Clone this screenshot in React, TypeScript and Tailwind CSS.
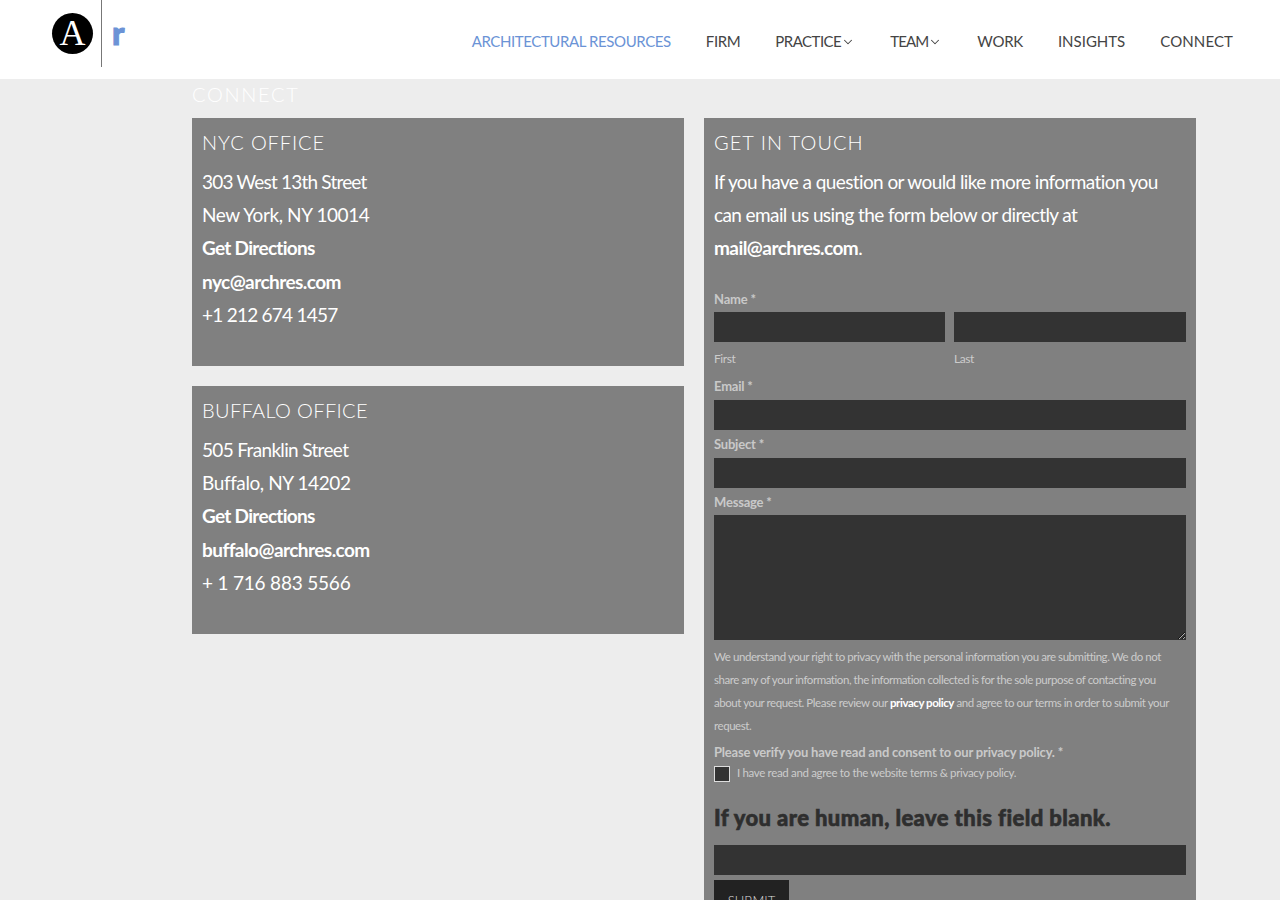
import React from "react";
import { ChevronDown } from "lucide-react";

const font = "font-['Lato',sans-serif]";

function NavItem({ label, track, blue, chevron }: { label: string; track: string; blue?: boolean; chevron?: boolean }) {
  return (
    <a className={`flex items-center text-[15px] leading-[20px] ${blue ? "text-[#6b93d6]" : "text-[#444444]"}`}>
      <span className={track}>{label}</span>
      {chevron && <ChevronDown size={14} strokeWidth={1.8} className="mt-[1px]" />}
    </a>
  );
}

function Logo() {
  return (
    <div className="flex h-[67px] items-start">
      <div className="mt-[13px] flex h-[41px] w-[41px] items-center justify-center rounded-full bg-black pb-[1px] font-['Liberation_Serif',serif] text-[36px] leading-none text-white">
        A
      </div>
      <div className="ml-[8px] h-[67px] w-px bg-[#777777]" />
      <div className="ml-[10px] mt-[14px] font-['Lato',sans-serif] text-[33px] font-black leading-[36px] text-[#6b93d6] [-webkit-text-stroke:1px_#6b93d6]">r</div>
    </div>
  );
}

function Office({ title, titleTrack, lines }: { title: string; titleTrack: string; lines: [string, string][] }) {
  return (
    <section className="h-[248px] bg-[#808080] px-[10px] pt-[10px] text-white">
      <h2 className={`text-[20px] font-light leading-[28px] ${titleTrack}`}>{title}</h2>
      <div className="mt-[9px] text-[19px] leading-[33.2px]">
        {lines.map(([t, c]) => (
          <div key={t} className={c}>{t}</div>
        ))}
      </div>
    </section>
  );
}

const inputCls = "block h-[30px] w-full bg-[#333333] outline-none";
const labelCls = "block text-[13px] font-bold leading-[16px] tracking-[-0.2px] text-[#c9c9c9]";

export default function App() {
  return (
    <div className={`${font} h-[900px] overflow-hidden bg-[#ededed]`}>
      <header className="flex h-[79px] items-start justify-between bg-white pl-[52px] pr-[47px]">
        <Logo />
        <nav className="mt-[31px] flex items-center gap-[35px]">
          <NavItem label="ARCHITECTURAL RESOURCES" track="tracking-[-0.4px]" blue />
          <NavItem label="FIRM" track="tracking-[-0.4px]" />
          <NavItem label="PRACTICE" track="tracking-[-0.5px]" chevron />
          <NavItem label="TEAM" track="tracking-[-0.9px]" chevron />
          <NavItem label="WORK" track="tracking-[-0.28px]" />
          <NavItem label="INSIGHTS" track="tracking-[0px]" />
          <NavItem label="CONNECT" track="tracking-[0.1px]" />
        </nav>
      </header>

      <main className="ml-[192px] w-[1004px]">
        <h1 className="pt-[3px] text-[20px] font-light leading-[25px] tracking-[1.7px] text-white">CONNECT</h1>
        <div className="mt-[11px] grid grid-cols-2 gap-[20px]">
          <div className="flex flex-col gap-[20px]">
            <Office
              title="NYC OFFICE"
              titleTrack="tracking-[0.9px]"
              lines={[
                ["303 West 13th Street", "tracking-[-0.8px]"],
                ["New York, NY 10014", "tracking-[-0.4px]"],
                ["Get Directions", "font-bold tracking-[-0.7px]"],
                ["nyc@archres.com", "font-bold tracking-[-0.56px]"],
                ["+1 212 674 1457", "tracking-[-0.75px]"],
              ]}
            />
            <Office
              title="BUFFALO OFFICE"
              titleTrack="tracking-[0.35px]"
              lines={[
                ["505 Franklin Street", "tracking-[-0.66px]"],
                ["Buffalo, NY 14202", "tracking-[-0.4px]"],
                ["Get Directions", "font-bold tracking-[-0.7px]"],
                ["buffalo@archres.com", "font-bold tracking-[-0.56px]"],
                ["+ 1 716 883 5566", "tracking-[-0.2px]"],
              ]}
            />
          </div>

          <section className="bg-[#808080] px-[10px] pb-[40px] pt-[10px]">
            <h2 className="text-[20px] font-light leading-[28px] tracking-[1.0px] text-white">GET IN TOUCH</h2>
            <p className="mt-[9px] text-[19px] leading-[33.2px] tracking-[-0.6px] text-white">
              If you have a question or would like more information you
              <br />
              can email us using the form below or directly at
              <br />
              <b className="tracking-[-0.56px]">mail@archres.com</b>.
            </p>

            <label className={`${labelCls} mt-[26px]`}>Name *</label>
            <div className="mt-[5px] grid grid-cols-[231px_1fr] gap-[9px]">
              <div>
                <input className={inputCls} />
                <div className="mt-[9px] text-[12px] leading-[16px] tracking-[-0.4px] text-[#cccccc]">First</div>
              </div>
              <div>
                <input className={inputCls} />
                <div className="mt-[9px] text-[12px] leading-[16px] tracking-[-0.4px] text-[#cccccc]">Last</div>
              </div>
            </div>

            <label className={`${labelCls} mt-[11px]`}>Email *</label>
            <input className={`${inputCls} mt-[6px]`} />
            <label className={`${labelCls} mt-[6px]`}>Subject *</label>
            <input className={`${inputCls} mt-[6px]`} />
            <label className={`${labelCls} mt-[6px]`}>Message *</label>
            <textarea className="mt-[5px] block h-[125px] w-full bg-[#333333] outline-none" />

            <p className="mt-[5px] text-[11.5px] leading-[23px] tracking-[-0.44px] text-[#cccccc]">
              We understand your right to privacy with the personal information you are submitting. We do not
              <br />
              share any of your information, the information collected is for the sole purpose of contacting you
              <br />
              about your request. Please review our <b className="text-white">privacy policy</b> and agree to our terms in order to submit your
              <br />
              request.
            </p>
            <label className={`${labelCls} mt-[7px]`}>Please verify you have read and consent to our privacy policy. *</label>
            <div className="mt-[6px] flex items-start">
              <span className="block h-[16px] w-[16px] border border-[#dddddd] bg-[#333333]" />
              <span className="ml-[7px] text-[11.5px] leading-[14px] tracking-[-0.34px] text-[#cccccc]">
                I have read and agree to the website terms &amp; privacy policy.
              </span>
            </div>
            <h3 className="mt-[21px] text-[22px] font-black leading-[30px] tracking-[0.4px] text-[#2e2e2e] [-webkit-text-stroke:0.6px_#2e2e2e]">If you are human, leave this field blank.</h3>
            <input className={`${inputCls} mt-[12px]`} />
            <button className="mt-[5px] block h-[44px] w-[75px] bg-[#222222] text-[13px] font-light text-[#dddddd]">SUBMIT</button>
          </section>
        </div>
      </main>
    </div>
  );
}
